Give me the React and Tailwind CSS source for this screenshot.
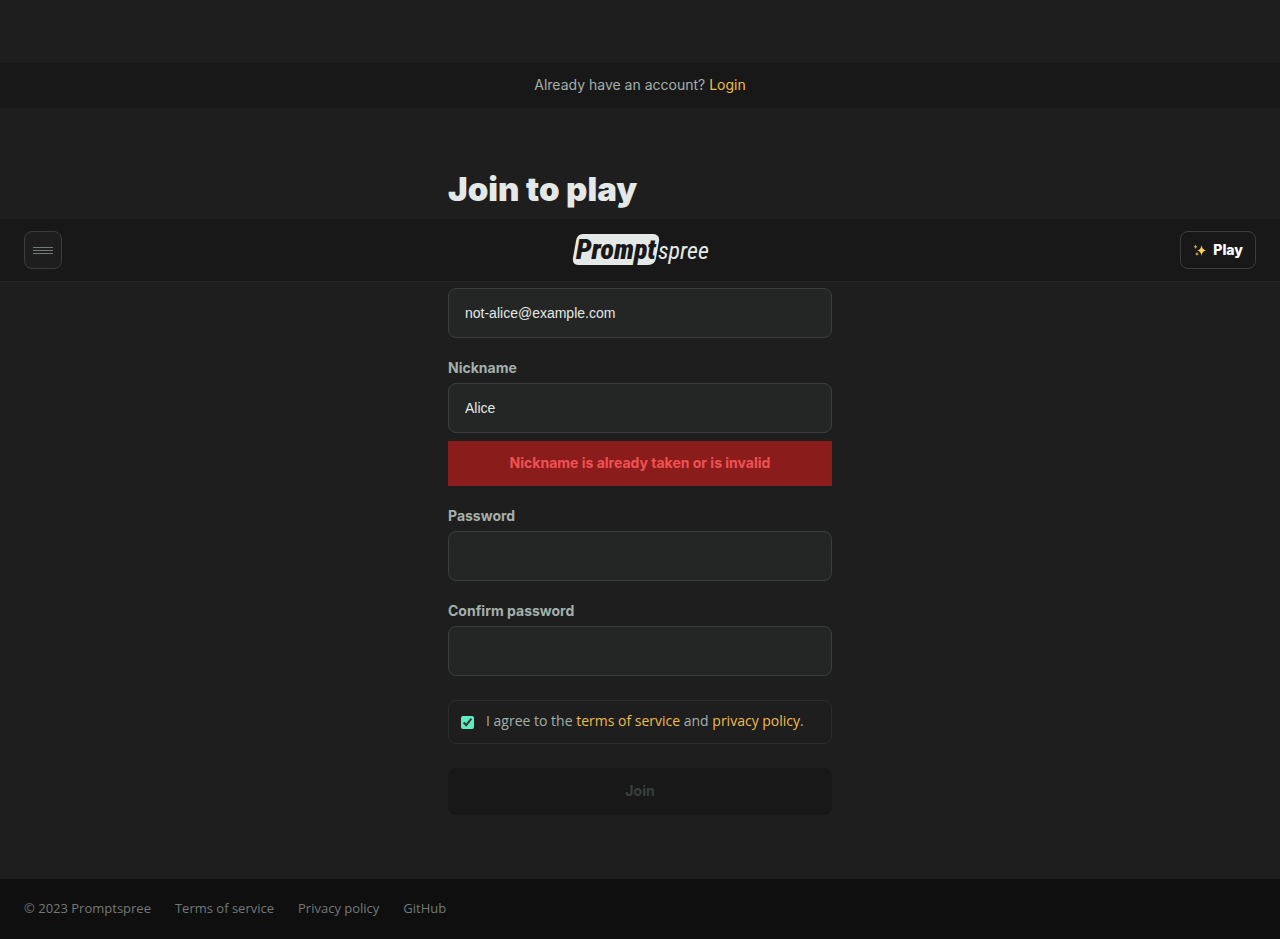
import React from "react";

const fieldClass =
  "h-[50px] w-full rounded-lg border border-[#3a3f3d] bg-[#232625] px-4 font-['Liberation_Sans',sans-serif] text-sm text-[#e4e9e7] outline-none";

function Field({ id, label, type = "text", value = "", error }) {
  return (
    <div className="flex flex-col">
      <label htmlFor={id} className="mb-[5px] self-start text-sm leading-5 font-bold text-[#a3b0ab]">
        {label}
      </label>
      <input id={id} type={type} defaultValue={value} className={fieldClass} />
      {error && (
        <p role="alert" className="mt-2 bg-[#8b1c1c] px-4 pt-3 pb-[13px] text-center text-sm leading-5 font-bold text-[#f05252]">
          {error}
        </p>
      )}
    </div>
  );
}

function Logo() {
  return (
    <svg width="136" height="34" viewBox="0 0 136 34" role="img" aria-label="Promptspree" className="overflow-visible">
      <path d="M11 1H80Q88 1 87 8L84 25Q83 32 76 32H7Q0 32 1 25L4 8Q5 1 11 1Z" fill="#e4e9e7" />
      <text x="4" y="26" fill="#181818" className="font-['Roboto_Condensed','Roboto',sans-serif] text-[28px] font-black italic">
        Prompt
      </text>
      <text x="86" y="26" fill="#e4e9e7" className="font-['Roboto_Condensed','Roboto',sans-serif] text-[24px] italic">
        spree
      </text>
    </svg>
  );
}

function Sparkles() {
  return (
    <svg width="14" height="14" viewBox="0 0 14 14" aria-hidden="true">
      <path d="M8.5 2Q9 6.5 13 7.500Q9 8 8.5 13Q8 8 4 7.500Q8 7 8.500 2Z" fill="#fcd34d" />
      <path d="M2.500 1.500Q2.900 3.300 4.500 3.700Q2.900 4.100 2.500 6Q2.100 4.100 0.500 3.700Q2.100 3.300 2.500 1.500Z" fill="#d9a62b" />
      <path d="M4 9Q4.300 10.700 6 11Q4.300 11.300 4 13Q3.700 11.300 2 11Q3.700 10.700 4 9Z" fill="#d9a62b" />
    </svg>
  );
}

function Header() {
  return (
    <header className="absolute inset-x-0 top-[219px] grid grid-cols-3 items-center border-b border-[#232524] bg-[#181818] px-6 py-3">
      <button
        type="button"
        aria-label="Menu"
        className="flex size-[38px] items-center justify-center rounded-lg border border-[#3a3c3b] bg-[#1e1e1e]"
      >
        <svg width="20" height="7" viewBox="0 0 20 7" fill="#737b78" aria-hidden="true">
          <rect width="20" height="1" />
          <rect y="3" width="20" height="1" />
          <rect y="6" width="20" height="1" />
        </svg>
      </button>
      <a href="#" className="justify-self-center">
        <Logo />
      </a>
      <button
        type="button"
        className="flex h-[38px] items-center gap-[6px] justify-self-end rounded-lg border border-[#3a3f3d] px-3 text-sm font-extrabold text-white"
      >
        <Sparkles />
        Play
      </button>
    </header>
  );
}

export default function App() {
  return (
    <div className="relative flex min-h-screen flex-col bg-[#1e1e1e] pt-[63px] font-['Inter',sans-serif] text-[#a3b0ab]">
      <p className="bg-[#181818] px-6 pt-3 pb-[13px] text-center text-sm leading-5">
        Already have an account?{" "}
        <a href="#" className="text-[#f0bc4e]">
          Login
        </a>
      </p>

      <main className="mx-auto w-full max-w-96 grow py-16">
        <h1 className="mb-14 text-[33px] leading-[35px] font-black text-[#e4e9e7]">Join to play</h1>
        <form className="flex flex-col gap-6" onSubmit={(e) => e.preventDefault()}>
          <div className="flex flex-col gap-5">
            <Field id="email" label="Email" type="email" value="not-alice@example.com" />
            <Field id="nickname" label="Nickname" value="Alice" error="Nickname is already taken or is invalid" />
            <Field id="password" label="Password" type="password" />
            <Field id="confirm" label="Confirm password" type="password" />
          </div>
          <div className="flex h-11 items-center gap-3 rounded-lg border border-[#2b2d2c] px-3">
            <input id="agree" type="checkbox" defaultChecked className="size-[13px] accent-[#5eebbf]" />
            <label htmlFor="agree" className="pb-0.5 font-['Open_Sans',sans-serif] text-sm leading-5">
              I agree to the{" "}
              <a href="#" className="text-[#f0bc4e]">
                terms of service
              </a>{" "}
              and{" "}
              <a href="#" className="text-[#f0bc4e]">
                privacy policy
              </a>
              .
            </label>
          </div>
          <button type="submit" disabled className="h-[47px] rounded-lg bg-[#181818] pb-px text-sm font-bold text-[#3a3f3d]">
            Join
          </button>
        </form>
      </main>

      <footer className="flex h-[60px] items-center gap-6 bg-[#0f0f0f] px-6 font-['Open_Sans',sans-serif] text-[13px] text-[#717976]">
        <span>© 2023 Promptspree</span>
        <a href="#">Terms of service</a>
        <a href="#">Privacy policy</a>
        <a href="#">GitHub</a>
      </footer>

      <Header />
    </div>
  );
}
